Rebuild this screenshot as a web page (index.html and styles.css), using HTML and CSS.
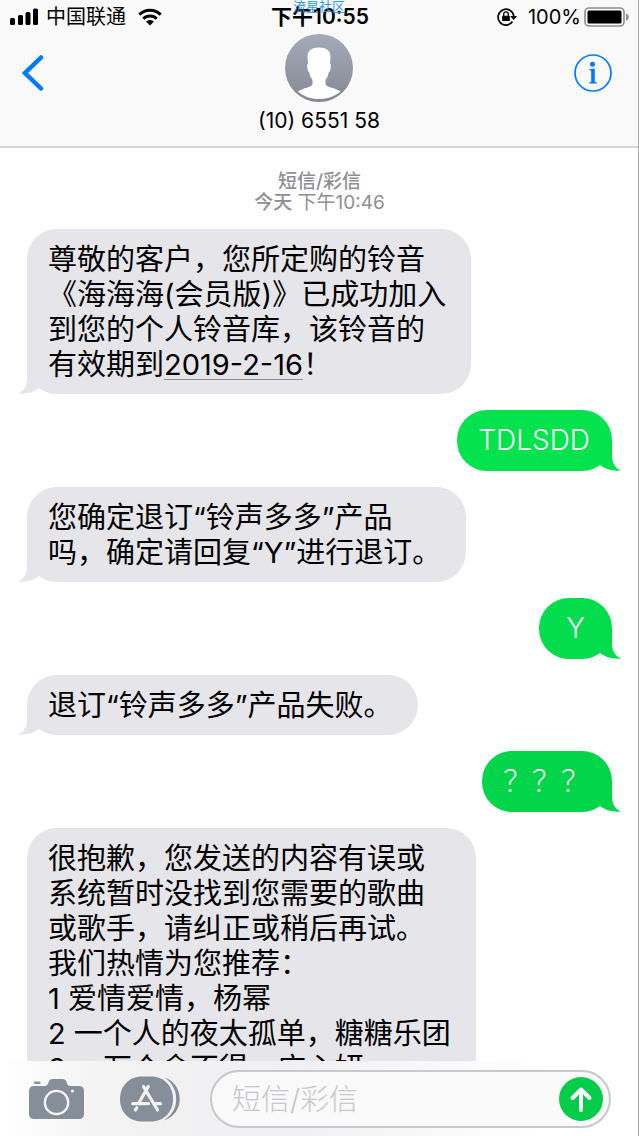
FILE: index.html
```html
<!DOCTYPE html>
<html lang="zh-CN">
<head>
<meta charset="utf-8">
<meta name="viewport" content="width=device-width, initial-scale=1">
<title>(10) 6551 58</title>
<link rel="stylesheet" href="styles.css">
</head>
<body>
<svg width="0" height="0" class="defs" aria-hidden="true">
  <symbol id="tail" viewBox="0 6 32 30"><path d="M9 6V20C9 28 6 33 0 35.500C8 36.500 16 34 21 30L32 20V6Z"/></symbol>
</svg>
<div class="phone">
  <header class="top">
    <div class="status">
      <div class="status-left">
        <svg width="28" height="18" viewBox="0 0 28 18" aria-hidden="true"><rect x="0" y="10" width="5" height="7" rx="1.5"/><rect x="8" y="7" width="5" height="10" rx="1.5"/><rect x="15.500" y="4" width="5" height="13" rx="1.5"/><rect x="23" y="0.500" width="5" height="16.500" rx="1.5"/></svg>
        <span class="carrier">中国联通</span>
        <svg class="wifi" width="24" height="18" viewBox="0 0 24 18" aria-hidden="true"><path d="M1.300 6.600A15.200 15.200 0 0 1 22.700 6.600M5.300 10.700A9.600 9.600 0 0 1 18.700 10.700" fill="none" stroke="#000" stroke-width="3"/><path d="M8 13.600A6 6 0 0 1 16 13.600L12 17.500Z"/></svg>
      </div>
      <time class="clock">下午10:55</time>
      <div class="status-right">
        <svg width="20" height="18" viewBox="0 0 20 18" aria-hidden="true"><path d="M15.500 13.600A7.900 7.900 0 1 1 16.800 8" fill="none" stroke="#000" stroke-width="1.700"/><path d="M13.200 8H20L16.600 12Z"/><rect x="5.200" y="7.800" width="7.600" height="5.200" rx="0.600"/><path d="M6.700 8V6.200A2.300 2.300 0 0 1 11.300 6.200V8" fill="none" stroke="#000" stroke-width="1.300"/></svg>
        <span class="percent">100%</span>
        <svg width="46" height="20" viewBox="0 0 46 20" aria-hidden="true"><rect x="1" y="1" width="39" height="18" rx="4" fill="none" stroke="#8e8e8e" stroke-width="1.600"/><rect x="3.500" y="3.500" width="34" height="13" rx="1.500"/><path d="M42 6.500C45.700 7.500 45.700 12.500 42 13.500Z" fill="#8e8e8e"/></svg>
      </div>
    </div>
    <nav class="nav">
      <button class="icon-button back" type="button" aria-label="返回"><svg width="22" height="38" viewBox="0 0 22 38"><path d="M19 3.500L3 19L19 34.500" fill="none" stroke="#007aff" stroke-width="4.500" stroke-linecap="round" stroke-linejoin="miter"/></svg></button>
      <div class="contact">
        <svg width="68" height="68" viewBox="0 0 68 68" aria-hidden="true">
          <defs><linearGradient id="avatar" x1="0" y1="0" x2="0" y2="1"><stop offset="0" stop-color="#a4aab9"/><stop offset="1" stop-color="#858993"/></linearGradient></defs>
          <circle cx="34" cy="34" r="34" fill="url(#avatar)"/>
          <path fill="#fff" d="M34 13.500C41 13.500 45.500 16.500 45.500 22.500L45 30C46.200 30 46 32.500 45.500 35C45.200 36.800 44.500 38 43.800 38C43.400 41 42.500 43.500 40.500 46V50.500C42 53.500 50 53.500 55.500 57.500C49.500 62.500 42 65 34 65S18.500 62.500 13 57.500C18.500 53.500 26 53.500 27.500 50.500V46C25.500 43.500 24.600 41 24.200 38C23.500 38 22.800 36.800 22.500 35C22 32.500 21.800 30 23 30L22.500 22.500C22.500 16.500 27 13.500 34 13.500Z"/>
        </svg>
        <h1 class="name">(10) 6551 58</h1>
      </div>
      <button class="icon-button info" type="button" aria-label="详细信息"><svg width="38" height="38" viewBox="0 0 38 38"><circle cx="19" cy="19" r="18" fill="none" stroke="#007aff" stroke-width="1.700"/><circle cx="18.500" cy="10.300" r="2.500" fill="#007aff"/><path fill="#007aff" d="M15.200 15.200L20.800 14.600V27.500C20.800 28 21.500 28.300 22.800 28.500V29.500H15.200V28.500C16.500 28.300 17.200 28 17.200 27.500V16.800C17.200 16.300 16.500 16.200 15.200 16.200Z"/></svg></button>
    </nav>
    <span class="watermark">流星社区</span>
  </header>

  <main class="chat">
    <p class="stamp"><strong>短信/彩信</strong><br><strong>今天</strong> 下午10:46</p>
    <div class="bubble received">尊敬的客户，您所定购的铃音<br>《海海海(会员版)》已成功加入<br>到您的个人铃音库，该铃音的<br>有效期到<a class="date" href="#date">2019-2-16</a>！<svg class="tail"><use href="#tail"/></svg></div>
    <div class="bubble sent bright">TDLSDD<svg class="tail"><use href="#tail"/></svg></div>
    <div class="bubble received">您确定退订“铃声多多”产品<br>吗，确定请回复“Y”进行退订。<svg class="tail"><use href="#tail"/></svg></div>
    <div class="bubble sent medium">Y<svg class="tail"><use href="#tail"/></svg></div>
    <div class="bubble received">退订“铃声多多”产品失败。<svg class="tail"><use href="#tail"/></svg></div>
    <div class="bubble sent deep">？？？<svg class="tail"><use href="#tail"/></svg></div>
    <div class="bubble received">很抱歉，您发送的内容有误或<br>系统暂时没找到您需要的歌曲<br>或歌手，请纠正或稍后再试。<br>我们热情为您推荐：<br>1 爱情爱情，杨幂<br>2 一个人的夜太孤单，糖糖乐团<br>3 一万个舍不得，庄心妍</div>
  </main>

  <footer class="composer">
    <button class="icon-button" type="button" aria-label="相机"><svg width="56" height="42" viewBox="0 0 56 42"><path fill="#868e99" d="M5 8H16C18 8 18.500 6.500 19.500 4.500C20.700 1.500 21.500 1 24 1H33C35.500 1 36.500 1.500 37.700 4.500C38.500 6.500 39 8 41 8H50Q55 8 55 13V36Q55 41 50 41H5Q0 41 0 36V13Q0 8 5 8Z"/><rect x="5" y="3.500" width="6.500" height="2.500" rx="1" fill="#868e99"/><circle cx="27.500" cy="24.500" r="11.700" fill="none" stroke="#f6f6f7" stroke-width="2.300"/><circle cx="43.500" cy="13" r="1.600" fill="#f6f6f7"/></svg></button>
    <button class="icon-button apps" type="button" aria-label="应用"><svg width="60" height="46" viewBox="0 0 60 46"><path fill="#868e99" d="M22 .500H31C44 .500 53 10 53 23S44 45.500 31 45.500H22C9 45.500 0 36 0 23S9 .500 22 .500Z"/><path fill="#868e99" d="M45 1.500C54 5 59.700 13 59.700 23S54 41 44 44.500C52 39 56.200 32 56.200 23S52 7 45 1.500Z"/><g fill="none" stroke="#f3f3f4" stroke-width="3.200" stroke-linecap="round"><path d="M28.300 10.500L19.300 26M23.500 10.500L37.500 34M12.800 27.700H28.500M35 27.700H40.500M16.800 31.800L15.300 34"/></g></svg></button>
    <form class="field">
      <input class="message" type="text" aria-label="短信/彩信" placeholder="短信/彩信">
      <button class="icon-button" type="button" aria-label="发送"><svg width="44" height="44" viewBox="0 0 44 44"><circle cx="22" cy="22" r="22" fill="#02cc48"/><path d="M22 33V13M13.500 21L22 12.500L30.500 21" fill="none" stroke="#fff" stroke-width="4" stroke-linecap="round" stroke-linejoin="round"/></svg></button>
    </form>
  </footer>
</div>
</body>
</html>
```
FILE: styles.css
```css
* {
  box-sizing: border-box;
}

body {
  margin: 0;
  background: #fff;
  color: #000;
  font-family: Inter, "Noto Sans CJK SC", sans-serif;
}

svg {
  display: block;
  flex: none;
}

.defs {
  position: absolute;
}

.phone {
  display: flex;
  flex-direction: column;
  height: 100vh;
  border-right: 1px solid #a8a8a8;
}

.top {
  position: relative;
  flex: none;
  background: #f9f9f9;
  border-bottom: 2px solid #d5d5d5;
}

.status {
  display: grid;
  grid-template-columns: 1fr auto 1fr;
  align-items: center;
  padding: 0 8px 0 10px;
  font-size: 20px;
  line-height: 34px;
}

.status-left,
.status-right {
  display: flex;
  align-items: center;
  gap: 8px;
}

.status-right {
  justify-content: flex-end;
  gap: 3px;
}

.wifi {
  margin-left: 4px;
}

.percent {
  margin-left: 8px;
}

.clock {
  font-size: 21px;
  font-weight: 600;
}

.watermark {
  position: absolute;
  top: 0;
  left: 0;
  right: 0;
  color: #2d9cf0;
  font-size: 13px;
  line-height: 12px;
  text-align: center;
  pointer-events: none;
}

.nav {
  display: grid;
  grid-template-columns: 1fr auto 1fr;
  align-items: start;
  padding: 0 22px 11px;
}

.icon-button {
  flex: none;
  padding: 0;
  border: 0;
  background: none;
}

.back,
.info {
  margin-top: 20px;
}

.back {
  justify-self: start;
}

.info {
  justify-self: end;
  margin-right: 4px;
}

.contact {
  display: flex;
  flex-direction: column;
  align-items: center;
}

.name {
  margin: 5px 0 0;
  font-size: 21px;
  font-weight: 400;
  line-height: 28px;
}

.chat {
  display: flex;
  flex: 1;
  flex-direction: column;
  gap: 16px;
  min-height: 0;
  padding: 23px 26px 0 27px;
  overflow: hidden;
}

.stamp {
  margin: 0;
  color: #8e8e93;
  font-size: 19px;
  line-height: 21px;
  text-align: center;
}

.stamp strong {
  font-weight: 500;
}

.bubble {
  position: relative;
  flex: none;
  border-radius: 30px;
  font-size: 29px;
  line-height: 35px;
}

.received {
  align-self: flex-start;
  padding: 13px 25px 12px 21px;
  background: #e5e5ea;
  color: #000;
  fill: #e5e5ea;
}

.sent {
  align-self: flex-end;
  padding: 13px 22px 13px 21px;
  color: #fff;
  font-weight: 300;
}

.bright {
  background: #04e34e;
  fill: #04e34e;
  font-size: 28px;
}

.medium {
  padding-left: 27px;
  padding-right: 27px;
  background: #03dc4c;
  fill: #03dc4c;
  font-size: 28px;
}

.deep {
  background: #02d54a;
  fill: #02d54a;
}

.tail {
  position: absolute;
  z-index: -1;
  bottom: 0;
  left: -9px;
  width: 32px;
  height: 30px;
}

.sent .tail {
  left: auto;
  right: -9px;
  transform: scaleX(-1);
}

.date {
  color: inherit;
  text-decoration: underline;
  text-decoration-color: #8e8e93;
  text-decoration-thickness: 1px;
  text-underline-offset: 4px;
}

.composer {
  display: flex;
  flex: none;
  align-items: center;
  padding: 9px 27px 8px 29px;
  background: linear-gradient(90deg, #fff 0, #f3f3f4 16%, #f0f0f2 45%, #fff 85%);
}

.apps {
  margin: 0 30px 0 35px;
}

.field {
  display: flex;
  flex: 1;
  align-items: center;
  min-width: 0;
  height: 58px;
  padding: 0 6px 0 20px;
  border: 2px solid #c8c8cd;
  border-radius: 29px;
  background: #fafafa;
}

.message {
  flex: 1;
  min-width: 0;
  padding: 0;
  border: 0;
  outline: 0;
  background: none;
  font-family: inherit;
  font-size: 29px;
  font-weight: 300;
}

.message::placeholder {
  color: #c7c7cc;
  opacity: 1;
}
```
